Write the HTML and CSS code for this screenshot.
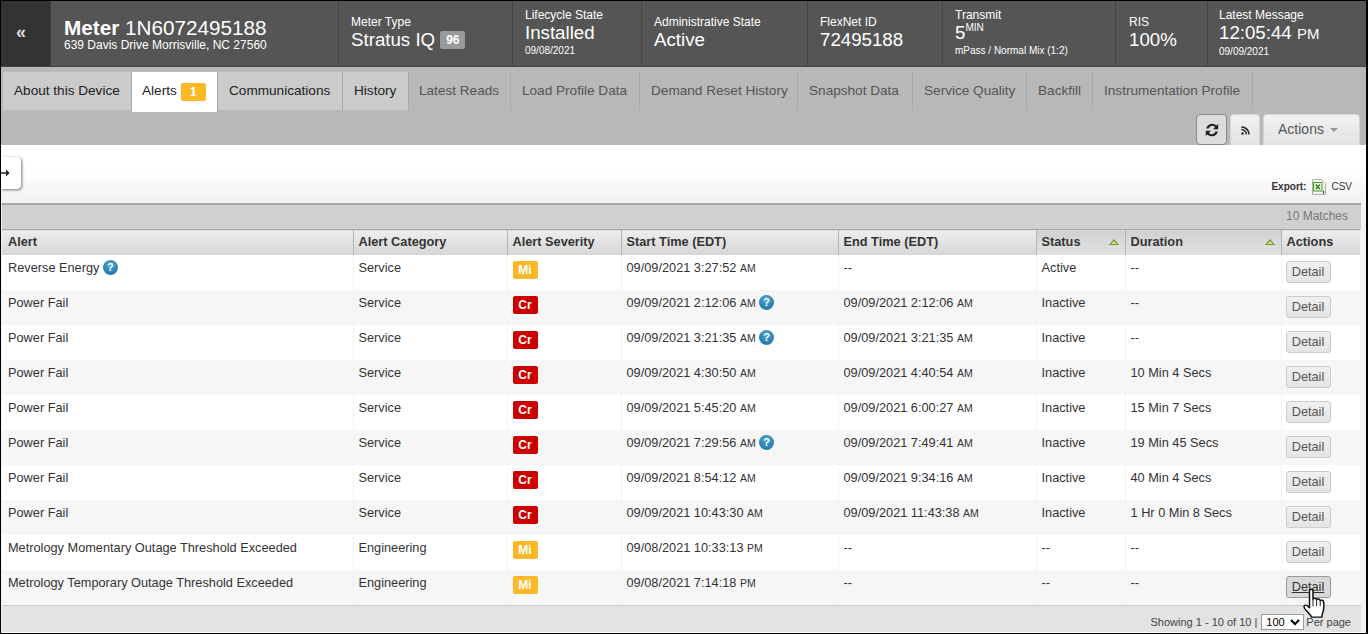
FILE: index.html
```html
<!DOCTYPE html>
<html lang="en">

<head>
    <meta charset="UTF-8">
    <meta name="viewport" content="width=device-width, initial-scale=1.0">
    <title>Meter 1N6072495188 - Alerts</title>
    <link rel="stylesheet" href="styles.css">
</head>

<body>
    <div class="frame">
        <header class="meter-head">
            <a class="back-btn">«</a>
            <div class="cell cell-meter">
                <div class="meter-name"><b>Meter</b> 1N6072495188</div>
                <div class="meter-addr">639 Davis Drive Morrisville, NC 27560</div>
            </div>
            <div class="cell cell-type">
                <div class="cell-label">Meter Type</div>
                <div class="cell-value">Stratus IQ <span class="type-badge">96</span></div>
            </div>
            <div class="cell cell-life">
                <div class="cell-label">Lifecycle State</div>
                <div class="cell-value">Installed</div>
                <div class="cell-sub">09/08/2021</div>
            </div>
            <div class="cell cell-admin">
                <div class="cell-label">Administrative State</div>
                <div class="cell-value">Active</div>
            </div>
            <div class="cell cell-flex">
                <div class="cell-label">FlexNet ID</div>
                <div class="cell-value">72495188</div>
            </div>
            <div class="cell cell-transmit">
                <div class="cell-label">Transmit</div>
                <div class="cell-value">5<sup class="unit">MIN</sup></div>
                <div class="cell-sub">mPass / Normal Mix (1:2)</div>
            </div>
            <div class="cell cell-ris">
                <div class="cell-label">RIS</div>
                <div class="cell-value">100%</div>
            </div>
            <div class="cell cell-latest">
                <div class="cell-label">Latest Message</div>
                <div class="cell-value">12:05:44 <small>PM</small></div>
                <div class="cell-sub">09/09/2021</div>
            </div>
        </header>

        <nav class="tabs">
            <a class="tab tab-main tab-about">About this Device</a>
            <a class="tab tab-active tab-alerts">Alerts <span class="tab-count">1</span></a>
            <a class="tab tab-main tab-comm">Communications</a>
            <a class="tab tab-main tab-hist">History</a>
            <a class="tab tab-reads">Latest Reads</a>
            <a class="tab tab-load">Load Profile Data</a>
            <a class="tab tab-demand">Demand Reset History</a>
            <a class="tab tab-snap">Snapshot Data</a>
            <a class="tab tab-qual">Service Quality</a>
            <a class="tab tab-back">Backfill</a>
            <a class="tab tab-instr">Instrumentation Profile</a>
        </nav>

        <div class="toolbar">
            <button class="tool-btn tool-refresh" aria-label="Refresh">
                <svg width="16" height="16" viewBox="0 0 16 16">
                    <path d="M2.3 6.6A5.9 5.9 0 0 1 12.4 3.6L14.2 2V7.2H9L11 5.1A3.7 3.7 0 0 0 4.6 6.6Z" fill="#222" />
                    <path d="M13.7 9.4A5.9 5.9 0 0 1 3.6 12.4L1.8 14V8.8H7L5 10.9A3.7 3.7 0 0 0 11.4 9.4Z" fill="#222" />
                </svg>
            </button>
            <button class="tool-btn tool-rss" aria-label="RSS">
                <svg width="9" height="9" viewBox="0 0 9 9">
                    <circle cx="1.5" cy="7.5" r="1.3" fill="#222" />
                    <path d="M0.4 3.6A5 5 0 0 1 5.4 8.6M0.4 0.9A7.7 7.7 0 0 1 8.1 8.6" fill="none" stroke="#222" stroke-width="1.5" />
                </svg>
            </button>
            <button class="tool-btn tool-actions">Actions <i class="caret"></i></button>
        </div>

        <main class="content">
            <button class="side-toggle" aria-label="Expand">
                <svg width="9" height="8" viewBox="0 0 9 8">
                    <path d="M0 3.2H5V0.6L8.6 4L5 7.4V4.8H0Z" fill="#222" />
                </svg>
            </button>
            <div class="export-row">
                <b>Export:</b>
                <svg class="csv-icon" width="14" height="16" viewBox="0 0 14 16">
                    <path d="M0.5 0.5H9.5L13.5 4.5V15.5H0.5Z" fill="#f4f6f2" stroke="#a9b3a6" />
                    <rect x="1.5" y="3.5" width="8.5" height="8.5" fill="#e3f0d8" stroke="#4f9a36" />
                    <path d="M3.8 5.5L7.8 10M7.8 5.5L3.8 10" stroke="#2f7d20" stroke-width="1.3" />
                    <path d="M11.5 12V14.5" stroke="#333" stroke-width="1.2" />
                </svg>
                <span>CSV</span>
            </div>
            <div class="matches">10 Matches</div>
            <table class="grid">
                <colgroup>
                    <col class="col-alert">
                    <col class="col-cat">
                    <col class="col-sev">
                    <col class="col-start">
                    <col class="col-end">
                    <col class="col-status">
                    <col class="col-dur">
                    <col class="col-act">
                </colgroup>
                <thead>
                    <tr>
                        <th>Alert</th>
                        <th>Alert Category</th>
                        <th>Alert Severity</th>
                        <th>Start Time (EDT)</th>
                        <th>End Time (EDT)</th>
                        <th class="sorted">Status<i class="sort-up"></i></th>
                        <th class="sorted">Duration<i class="sort-up"></i></th>
                        <th>Actions</th>
                    </tr>
                </thead>
                <tbody>
                    <tr>
                        <td>Reverse Energy <i class="help">?</i></td>
                        <td>Service</td>
                        <td><span class="sev sev-mi">Mi</span></td>
                        <td>09/09/2021 3:27:52 <small>AM</small></td>
                        <td>--</td>
                        <td>Active</td>
                        <td>--</td>
                        <td><a class="detail">Detail</a></td>
                    </tr>
                    <tr>
                        <td>Power Fail</td>
                        <td>Service</td>
                        <td><span class="sev sev-cr">Cr</span></td>
                        <td>09/09/2021 2:12:06 <small>AM</small> <i class="help">?</i></td>
                        <td>09/09/2021 2:12:06 <small>AM</small></td>
                        <td>Inactive</td>
                        <td>--</td>
                        <td><a class="detail">Detail</a></td>
                    </tr>
                    <tr>
                        <td>Power Fail</td>
                        <td>Service</td>
                        <td><span class="sev sev-cr">Cr</span></td>
                        <td>09/09/2021 3:21:35 <small>AM</small> <i class="help">?</i></td>
                        <td>09/09/2021 3:21:35 <small>AM</small></td>
                        <td>Inactive</td>
                        <td>--</td>
                        <td><a class="detail">Detail</a></td>
                    </tr>
                    <tr>
                        <td>Power Fail</td>
                        <td>Service</td>
                        <td><span class="sev sev-cr">Cr</span></td>
                        <td>09/09/2021 4:30:50 <small>AM</small></td>
                        <td>09/09/2021 4:40:54 <small>AM</small></td>
                        <td>Inactive</td>
                        <td>10 Min 4 Secs</td>
                        <td><a class="detail">Detail</a></td>
                    </tr>
                    <tr>
                        <td>Power Fail</td>
                        <td>Service</td>
                        <td><span class="sev sev-cr">Cr</span></td>
                        <td>09/09/2021 5:45:20 <small>AM</small></td>
                        <td>09/09/2021 6:00:27 <small>AM</small></td>
                        <td>Inactive</td>
                        <td>15 Min 7 Secs</td>
                        <td><a class="detail">Detail</a></td>
                    </tr>
                    <tr>
                        <td>Power Fail</td>
                        <td>Service</td>
                        <td><span class="sev sev-cr">Cr</span></td>
                        <td>09/09/2021 7:29:56 <small>AM</small> <i class="help">?</i></td>
                        <td>09/09/2021 7:49:41 <small>AM</small></td>
                        <td>Inactive</td>
                        <td>19 Min 45 Secs</td>
                        <td><a class="detail">Detail</a></td>
                    </tr>
                    <tr>
                        <td>Power Fail</td>
                        <td>Service</td>
                        <td><span class="sev sev-cr">Cr</span></td>
                        <td>09/09/2021 8:54:12 <small>AM</small></td>
                        <td>09/09/2021 9:34:16 <small>AM</small></td>
                        <td>Inactive</td>
                        <td>40 Min 4 Secs</td>
                        <td><a class="detail">Detail</a></td>
                    </tr>
                    <tr>
                        <td>Power Fail</td>
                        <td>Service</td>
                        <td><span class="sev sev-cr">Cr</span></td>
                        <td>09/09/2021 10:43:30 <small>AM</small></td>
                        <td>09/09/2021 11:43:38 <small>AM</small></td>
                        <td>Inactive</td>
                        <td>1 Hr 0 Min 8 Secs</td>
                        <td><a class="detail">Detail</a></td>
                    </tr>
                    <tr>
                        <td>Metrology Momentary Outage Threshold Exceeded</td>
                        <td>Engineering</td>
                        <td><span class="sev sev-mi">Mi</span></td>
                        <td>09/08/2021 10:33:13 <small>PM</small></td>
                        <td>--</td>
                        <td>--</td>
                        <td>--</td>
                        <td><a class="detail">Detail</a></td>
                    </tr>
                    <tr>
                        <td>Metrology Temporary Outage Threshold Exceeded</td>
                        <td>Engineering</td>
                        <td><span class="sev sev-mi">Mi</span></td>
                        <td>09/08/2021 7:14:18 <small>PM</small></td>
                        <td>--</td>
                        <td>--</td>
                        <td>--</td>
                        <td><a class="detail detail-hover">Detail</a></td>
                    </tr>
                </tbody>
            </table>
            <div class="pager">
                <span>Showing 1 - 10 of 10 |</span>
                <select class="per-page">
                    <option>100</option>
                </select>
                <span>Per page</span>
            </div>
        </main>

        <svg class="hand" width="24" height="31" viewBox="0 0 24 34" preserveAspectRatio="none">
            <path d="M6.5 3C6.5 0.8 10 0.8 10 3V12.5C10.5 11 13.2 11 13.6 12.8C14.2 11.6 16.8 11.8 17.2 13.8C18 12.9 20.4 13.2 20.6 15.2C21 19 21.2 23 20 26C19.4 28 19 30 18.8 32H8.6C8 29.5 5.5 27.5 3.5 25C2.2 23.4 0.6 21.4 1 20C1.5 18.2 3.6 18.8 4.6 19.8L6.5 21.6Z" fill="#fff" stroke="#111" stroke-width="1.5" stroke-linejoin="round" />
            <path d="M10 13V20M13.6 13V20M17.2 14V20" stroke="#111" stroke-width="1" fill="none" />
        </svg>
    </div>
</body>

</html>
```

FILE: styles.css
```css
* {
    box-sizing: border-box;
}

html,
body {
    margin: 0;
    padding: 0;
    background-color: #ffffff;
}

body {
    font-family: "Liberation Sans", Arial, sans-serif;
    font-size: 12px;
    color: #333333;
}

.frame {
    position: relative;
    width: 1368px;
    height: 634px;
    overflow: hidden;
    border-top: 1px solid #000000;
    border-left: 1px solid #000000;
    border-right: 2px solid #000000;
    border-bottom: 1px solid #000000;
}

/* meter header */
.meter-head {
    display: flex;
    height: 66px;
    background-color: #555555;
    border-bottom: 1px solid #444444;
    color: #ffffff;
}

.back-btn {
    display: flex;
    align-items: center;
    width: 50px;
    padding: 0 0 3px 15px;
    background-color: #333333;
    font-size: 18px;
    font-weight: bold;
    border-right: 1px solid #444444;
    color: #dddddd;
}

.cell {
    display: flex;
    flex-direction: column;
    justify-content: center;
    padding-left: 12px;
    border-right: 1px solid #444444;
}

.cell-meter {
    width: 288px;
    padding-left: 13px;
}

.cell-type {
    width: 174px;
}

.cell-life {
    width: 129px;
}

.cell-admin {
    width: 166px;
}

.cell-flex {
    width: 135px;
}

.cell-transmit {
    width: 173px;
}

.cell-ris {
    width: 92px;
    padding-left: 13px;
}

.cell-latest {
    flex: 1;
    padding-left: 11px;
    border-right: 0;
}

.meter-name {
    font-size: 20.7px;
    line-height: 23px;
}

.meter-addr {
    margin-top: -1px;
    font-size: 12px;
    line-height: 14px;
}

.cell-label {
    font-size: 12px;
    line-height: 14px;
}

.cell-value {
    margin-bottom: 2px;
    font-size: 18.7px;
    line-height: 21px;
}

.cell-value small {
    font-size: 15px;
}

.cell-sub {
    margin-bottom: 3px;
    font-size: 10px;
    line-height: 11px;
}

.unit {
    font-size: 10px;
    line-height: 0;
    vertical-align: 8px;
}

.type-badge {
    display: inline-block;
    width: 25px;
    height: 18px;
    border-radius: 2px;
    background-color: #999999;
    font-size: 12px;
    font-weight: bold;
    line-height: 18px;
    text-align: center;
    vertical-align: 2px;
}

/* tabs */
.tabs {
    display: flex;
    height: 45px;
    padding: 5px 0 0 2px;
    background-color: #b8b8b8;
}

.tab {
    display: flex;
    align-items: center;
    height: 38px;
    padding: 0 0 2px 11px;
    font-size: 13.6px;
    color: #555555;
    white-space: nowrap;
    border-right: 1px solid #a9a9a9;
}

.tab-main {
    background-color: #cbcbcb;
    color: #222222;
}

.tab-active {
    height: 40px;
    padding: 0 0 4px 10px;
    background-color: #ffffff;
    color: #222222;
}

.tab-count {
    display: inline-block;
    width: 25px;
    height: 18px;
    margin-left: 4px;
    margin-top: 4px;
    border-radius: 2px;
    background-color: #fdb827;
    color: #ffffff;
    font-size: 12px;
    font-weight: bold;
    line-height: 18px;
    text-align: center;
}

.tab-about {
    width: 129px;
}

.tab-alerts {
    width: 86px;
}

.tab-comm {
    width: 125px;
}

.tab-hist {
    width: 66px;
}

.tab-reads {
    width: 102px;
    padding-left: 10px;
}

.tab-load {
    width: 129px;
}

.tab-demand {
    width: 158px;
}

.tab-snap {
    width: 115px;
}

.tab-qual {
    width: 114px;
}

.tab-back {
    width: 66px;
}

.tab-instr {
    width: 160px;
}

.toolbar {
    display: flex;
    justify-content: flex-end;
    gap: 3px;
    height: 33px;
    padding: 2px 6px 0 0;
    background-color: #b8b8b8;
}

.tool-btn {
    display: flex;
    align-items: center;
    justify-content: center;
    height: 31px;
    padding: 0;
    background: linear-gradient(#f2f2f2, #e2e2e2);
    border: 1px solid #d4d4d4;
    border-bottom: 0;
    border-radius: 4px 4px 0 0;
    font-family: inherit;
    color: #555555;
}

.tool-refresh {
    width: 31px;
    border: 1px solid #888888;
    border-radius: 4px;
    background: #dcdcdc;
}

.tool-rss {
    width: 30px;
}

.tool-actions {
    width: 97px;
    padding: 0 7px 2px 0;
    font-size: 14px;
    gap: 6px;
}

.caret {
    display: inline-block;
    margin-top: 2px;
    border-top: 4px solid #999999;
    border-left: 4px solid transparent;
    border-right: 4px solid transparent;
}

/* main content */
.content {
    position: relative;
    height: 487px;
    padding: 0 5px 0 1px;
    background: linear-gradient(#ffffff 25px, #f2f2f2 55px);
}

.side-toggle {
    position: absolute;
    top: 12px;
    left: 0;
    width: 20px;
    height: 32px;
    padding: 0;
    background-color: #ffffff;
    border: 0;
    border-radius: 0 4px 4px 0;
    box-shadow: 1px 1px 3px #777777;
    display: flex;
    align-items: center;
}

.export-row {
    display: flex;
    align-items: center;
    justify-content: flex-end;
    gap: 6px;
    height: 58px;
    padding: 25px 9px 0 0;
    font-size: 10px;
}

.csv-icon {
    margin-right: -1px;
}

.matches {
    height: 26px;
    padding-right: 13px;
    border-top: 2px solid #a5a5a5;
    background-color: #d0d0d0;
    color: #777777;
    line-height: 23px;
    text-align: right;
}

.grid {
    width: 1358px;
    border-collapse: collapse;
    table-layout: fixed;
}

.col-alert {
    width: 351px;
}

.col-cat {
    width: 154px;
}

.col-sev {
    width: 114px;
}

.col-start {
    width: 217px;
}

.col-end {
    width: 198px;
}

.col-status {
    width: 89px;
}

.col-dur {
    width: 156px;
}

.col-act {
    width: 79px;
}

.grid th {
    position: relative;
    height: 25px;
    padding: 0 5px 1px;
    background: linear-gradient(#eeeeee, #d5d5d5);
    border-top: 1px solid #a5a5a5;
    border-left: 1px solid #b5b5b5;
    font-size: 12.75px;
    text-align: left;
}

.grid th:first-child,
.grid td:first-child {
    padding-left: 6px;
    border-left: 0;
}

.grid th.sorted {
    background: linear-gradient(#d0d0d0, #e4e4e4);
}

.sort-up {
    position: absolute;
    top: 9px;
    right: 6px;
    border-bottom: 6px solid #6d9a2e;
    border-left: 5px solid transparent;
    border-right: 5px solid transparent;
}

.sort-up::after {
    content: "";
    position: absolute;
    top: 2px;
    left: -3px;
    border-bottom: 3px solid #cfe6a8;
    border-left: 3px solid transparent;
    border-right: 3px solid transparent;
}

.grid td {
    height: 35px;
    padding: 5px 5px 0;
    background-color: #ffffff;
    border-left: 1px solid #f3f3f3;
    font-size: 12.75px;
    vertical-align: top;
    white-space: nowrap;
}

.grid tr:nth-child(even) td {
    background-color: #f6f6f6;
}

.grid small {
    font-size: 10.5px;
}

.help {
    display: inline-block;
    width: 15px;
    height: 15px;
    margin-top: -1px;
    border-radius: 50%;
    background: radial-gradient(circle at 50% 30%, #52a5d2, #156c9e);
    color: #ffffff;
    font-size: 11px;
    font-style: normal;
    font-weight: bold;
    line-height: 15px;
    text-align: center;
    vertical-align: middle;
}

.sev {
    display: inline-block;
    width: 25px;
    height: 18px;
    margin-top: 1px;
    border-radius: 2px;
    color: #ffffff;
    font-size: 12px;
    font-weight: bold;
    line-height: 18px;
    text-align: center;
}

.sev-mi {
    background-color: #fdb827;
}

.sev-cr {
    background-color: #cc0000;
}

.detail {
    display: block;
    width: 45px;
    height: 22px;
    margin: 1px 0 0 -1px;
    border: 1px solid #cccccc;
    border-radius: 3px;
    background: linear-gradient(#f0f0f0, #e4e4e4);
    color: #555555;
    line-height: 20px;
    text-align: center;
}

.detail-hover {
    border-color: #999999;
    background: #d9d9d9;
    color: #333333;
    text-decoration: underline;
}

.pager {
    display: flex;
    align-items: center;
    justify-content: flex-end;
    gap: 2px;
    height: 27px;
    padding: 6px 10px 0 0;
    border-top: 1px solid #cccccc;
    background-color: #e3e3e3;
    font-size: 11px;
    color: #444444;
}

.per-page {
    width: 43px;
    height: 16px;
    margin-left: 2px;
    padding: 0;
    font-family: inherit;
    font-size: 11px;
    background-color: #ffffff;
    border: 1px solid #999999;
}

.hand {
    position: absolute;
    left: 1302px;
    top: 587px;
}
```
